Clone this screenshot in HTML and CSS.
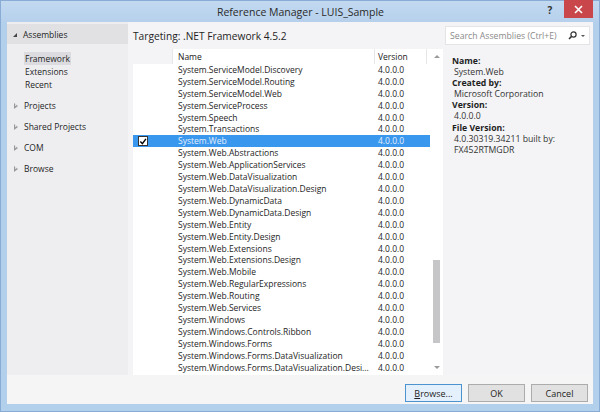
FILE: index.html
```html
<!DOCTYPE html>
<html>
<head>
<meta charset="utf-8">
<link rel="stylesheet" href="styles.css">
</head>
<body>
<div class="window">
  <div class="titlebar">
    <div class="title">Reference Manager - LUIS_Sample</div>
    <div class="help">?</div>
    <div class="close">
      <svg width="9" height="9" viewBox="0 0 9 9"><path d="M1 1 L8 8 M8 1 L1 8" stroke="#fff" stroke-width="1.6"/></svg>
    </div>
  </div>
  <div class="client">
    <div class="content">
      <div class="sidebar">
        <div class="group-head"><span class="tri-open"></span>Assemblies</div>
        <div class="sub selected"><span>Framework</span></div>
        <div class="sub"><span>Extensions</span></div>
        <div class="sub"><span>Recent</span></div>
        <div class="node"><span class="tri-closed"></span>Projects</div>
        <div class="node"><span class="tri-closed"></span>Shared Projects</div>
        <div class="node"><span class="tri-closed"></span>COM</div>
        <div class="node"><span class="tri-closed"></span>Browse</div>
      </div>
      <div class="main">
        <div class="topline">
          <div class="targeting">Targeting: .NET Framework 4.5.2</div>
          <div class="search">
            <span class="ph">Search Assemblies (Ctrl+E)</span>
            <svg class="mag" width="9" height="9" viewBox="0 0 9 9"><circle cx="5.5" cy="3.5" r="2.6" fill="none" stroke="#333" stroke-width="1.2"/><path d="M3.6 5.4 L1 8" stroke="#333" stroke-width="1.5"/></svg>
            <span class="dd"></span>
          </div>
        </div>
        <div class="lower">
          <div class="list">
            <div class="grid">
              <div class="header">
                <div class="c-check"></div>
                <div class="c-name">Name</div>
                <div class="c-ver">Version</div>
                <div class="c-pad"></div>
              </div>
              <div class="rows" id="rows"></div>
            </div>
            <div class="scroll">
              <div class="arrow up"></div>
              <div class="track"><div class="thumb"></div></div>
              <div class="arrow down"></div>
            </div>
          </div>
          <div class="details">
            <div class="lbl">Name:</div>
            <div class="val">System.Web</div>
            <div class="lbl">Created by:</div>
            <div class="val">Microsoft Corporation</div>
            <div class="lbl">Version:</div>
            <div class="val">4.0.0.0</div>
            <div class="lbl">File Version:</div>
            <div class="val">4.0.30319.34211 built by:</div>
            <div class="val">FX452RTMGDR</div>
          </div>
        </div>
      </div>
    </div>
    <div class="footer">
      <button class="btn primary"><u>B</u>rowse...</button>
      <button class="btn">OK</button>
      <button class="btn">Cancel</button>
    </div>
  </div>
</div>
<script src="app.js"></script>
</body>
</html>
```
FILE: app.js
```js
var names = [
  "System.ServiceModel.Discovery","System.ServiceModel.Routing","System.ServiceModel.Web",
  "System.ServiceProcess","System.Speech","System.Transactions","System.Web",
  "System.Web.Abstractions","System.Web.ApplicationServices","System.Web.DataVisualization",
  "System.Web.DataVisualization.Design","System.Web.DynamicData","System.Web.DynamicData.Design",
  "System.Web.Entity","System.Web.Entity.Design","System.Web.Extensions","System.Web.Extensions.Design",
  "System.Web.Mobile","System.Web.RegularExpressions","System.Web.Routing","System.Web.Services",
  "System.Windows","System.Windows.Controls.Ribbon","System.Windows.Forms",
  "System.Windows.Forms.DataVisualization","System.Windows.Forms.DataVisualization.Desi..."
];
var rows = document.getElementById("rows");
names.forEach(function (n) {
  var r = document.createElement("div");
  r.className = "row" + (n === "System.Web" ? " sel" : "");
  var c = document.createElement("div");
  c.className = "c-check";
  if (n === "System.Web") {
    c.innerHTML = '<span class="cb"><svg width="9" height="9" viewBox="0 0 9 9"><path d="M1.5 4.5 L3.8 7 L7.8 1.5" fill="none" stroke="#000" stroke-width="1.6"/></svg></span>';
  }
  var a = document.createElement("div");
  a.className = "c-name";
  a.textContent = n;
  var v = document.createElement("div");
  v.className = "c-ver";
  v.textContent = "4.0.0.0";
  var p = document.createElement("div");
  p.className = "c-pad";
  r.appendChild(c); r.appendChild(a); r.appendChild(v); r.appendChild(p);
  rows.appendChild(r);
});
```
FILE: styles.css
```css
* { box-sizing: border-box; }
html, body { margin: 0; padding: 0; }
body {
  width: 600px;
  height: 412px;
  overflow: hidden;
  font-family: "Open Sans", "Noto Sans", sans-serif;
  font-size: 8.5px;
  color: #1e1e1e;
  background: #a9c8e9;
}
.window {
  width: 600px;
  height: 412px;
  display: flex;
  flex-direction: column;
  background: #b2cfec;
  border: 1px solid #88acd6;
}
.titlebar {
  height: 21px;
  display: flex;
  align-items: center;
  background: linear-gradient(#c2d9f0, #b6d0ec);
}
.title {
  flex: 1;
  text-align: center;
  font-size: 10.5px;
  color: #2a2a2a;
  padding-left: 60px;
}
.help {
  width: 20px;
  font-size: 10px;
  font-weight: bold;
  color: #333;
  text-align: center;
  margin-right: 4px;
  margin-top: -3px;
}
.close {
  width: 29px;
  height: 18px;
  margin-right: 6px;
  align-self: flex-start;
  margin-top: -1px;
  background: #c9474a;
  display: flex;
  align-items: center;
  justify-content: center;
}
.client {
  flex: 1;
  margin: 0 6px 7px 6px;
  background: #f4f4f6;
  display: flex;
  flex-direction: column;
}
.content {
  height: 353px;
  display: flex;
}
.sidebar {
  width: 121px;
  background: #eeeef1;
  padding-top: 2px;
}
.group-head {
  height: 20px;
  background: #e1e1e4;
  display: flex;
  align-items: center;
  padding-left: 6px;
}
.tri-open {
  width: 0; height: 0;
  border-left: 4px solid transparent;
  border-bottom: 4px solid #444;
  margin-right: 6px;
  margin-top: 1px;
}
.sub {
  height: 13px;
  display: flex;
  align-items: center;
  padding-left: 17px;
}
.group-head + .sub { margin-top: 8px; }
.sub span { padding: 0 1px; line-height: 13px; }
.sub.selected span { background: #dcdce0; }
.node {
  height: 21px;
  display: flex;
  align-items: center;
  padding-left: 7px;
}
.sub + .node { margin-top: 4px; }
.tri-closed {
  width: 0; height: 0;
  border-top: 3px solid transparent;
  border-bottom: 3px solid transparent;
  border-left: 4px solid #9a9a9a;
  margin-right: 6px;
  position: relative;
}
.tri-closed::after {
  content: "";
  position: absolute;
  left: -3px; top: -1.5px;
  border-top: 1.5px solid transparent;
  border-bottom: 1.5px solid transparent;
  border-left: 2px solid #eeeef1;
}
.main {
  flex: 1;
  display: flex;
  flex-direction: column;
  padding-left: 5px;
}
.topline {
  height: 26px;
  display: flex;
  align-items: center;
}
.targeting { flex: 1; padding-top: 2px; font-size: 10.2px; }
.search {
  width: 145px;
  height: 19px;
  margin-right: 3px;
  margin-top: 1px;
  background: #fff;
  border: 1px solid #e4e4e6;
  display: flex;
  align-items: center;
  padding-left: 4px;
}
.ph { color: #8a8a8a; flex: 1; font-size: 8.7px; }
.mag { margin-right: 4px; }
.dd {
  width: 0; height: 0;
  border-left: 2px solid transparent;
  border-right: 2px solid transparent;
  border-top: 2px solid #555;
  margin-right: 4px;
  margin-top: 1px;
}
.lower {
  flex: 1;
  display: flex;
}
.list {
  width: 310px;
  background: #fff;
  display: flex;
  margin-top: 1px;
}
.grid { flex: 1; display: flex; flex-direction: column; }
.header {
  height: 15px;
  display: flex;
  color: #222;
}
.header > div { border-right: 1px solid #e6e6e8; display: flex; align-items: center; }
.header .c-check { background: #f4f4f6; }
.c-check { width: 40px; flex: none; padding-left: 5px; display: flex; align-items: center; }
.c-name { width: 202px; flex: none; padding-left: 5px; white-space: nowrap; overflow: hidden; }
.c-ver { width: 52px; flex: none; padding-left: 3px; }
.c-pad { flex: 1; }
.header .c-pad { border-right: none; }
.row {
  height: 11.92px;
  display: flex;
  align-items: center;
  line-height: 12px;
  color: #1e1e1e;
}
.row.sel { background: #3a97ee; color: #e2eefb; }
.cb {
  width: 10px; height: 10px;
  background: #fff;
  border: 1px solid #333;
  display: flex; align-items: center; justify-content: center;
}
.scroll {
  width: 13px;
  display: flex;
  flex-direction: column;
  align-items: center;
  background: #fff;
}
.arrow { width: 0; height: 0; border-left: 3px solid transparent; border-right: 3px solid transparent; }
.arrow.up { border-bottom: 3px solid #9a9a9a; margin-top: 6px; }
.arrow.down { border-top: 3px solid #9a9a9a; margin-bottom: 6px; }
.track { flex: 1; width: 100%; padding-top: 202px; display: flex; justify-content: center; }
.thumb { width: 7px; height: 83px; background: #c6c6c8; }
.details {
  flex: 1;
  padding-left: 9px;
  padding-top: 8px;
  line-height: 11.1px;
  font-size: 8.7px;
}
.lbl { font-weight: bold; color: #1e1e1e; }
.val { padding-left: 2px; color: #333; }
.footer {
  flex: 1;
  display: flex;
  justify-content: flex-end;
  align-items: flex-start;
  padding-top: 9px;
  padding-right: 5px;
  gap: 6px;
  background: #f5f5f6;
}
.btn {
  width: 57px;
  height: 18px;
  font-family: "Open Sans", "Noto Sans", sans-serif;
  font-size: 9px;
  color: #1e1e1e;
  background: #e1e1e1;
  border: 1px solid #acacac;
  padding: 0;
}
.btn.primary { background: #e4f0fb; border-color: #4d93cf; }
```
